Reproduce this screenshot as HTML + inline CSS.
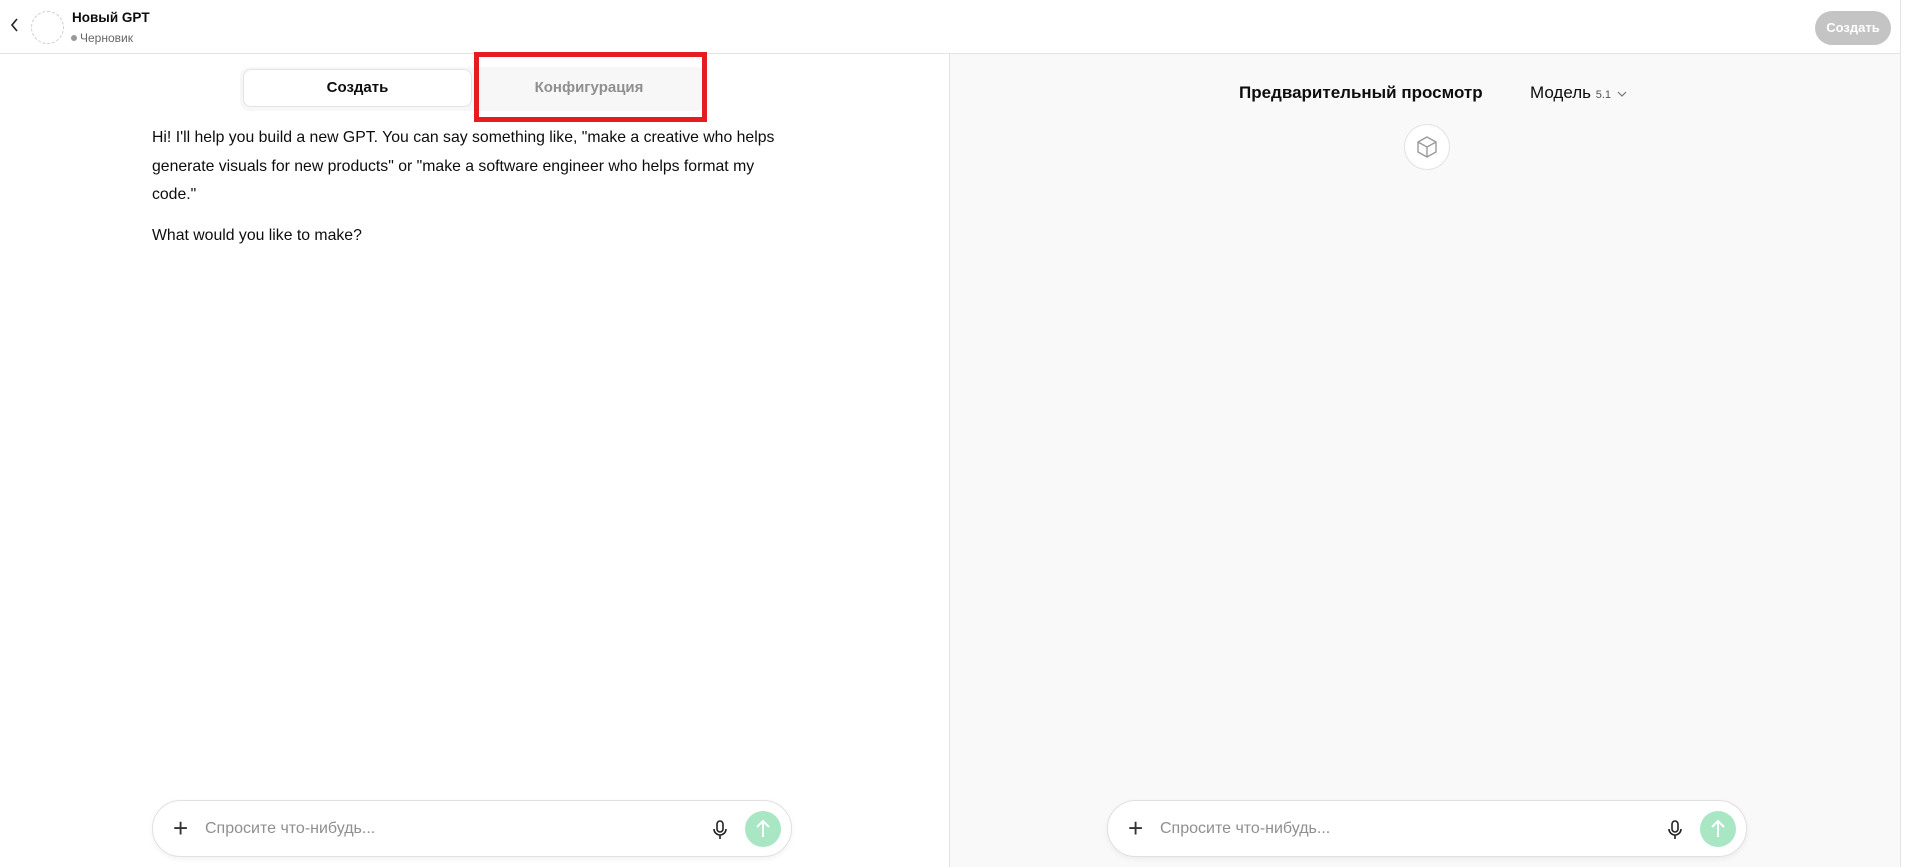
<!DOCTYPE html>
<html><head><meta charset="utf-8"><style>
*{box-sizing:border-box;margin:0;padding:0}
body{width:1907px;height:867px;overflow:hidden;background:#fff;font-family:"Liberation Sans","Noto Sans CJK SC",sans-serif;color:#0d0d0d;position:relative}
.hdr{position:absolute;left:0;top:0;width:1900px;height:54px;border-bottom:1px solid #e3e3e3;background:#fff}
.rightbg{position:absolute;left:949px;top:54px;width:951px;height:813px;background:#f9f9f9;border-left:1px solid #e3e3e3}
.edge{position:absolute;left:1900px;top:0;width:1px;height:867px;background:#e3e3e3}
.abs{position:absolute}
.input{position:absolute;top:800px;width:640px;height:57px;border:1px solid #e0e0e0;border-radius:29px;background:#fff;box-shadow:0 2px 6px rgba(0,0,0,.06)}
.input .ph{position:absolute;left:52px;top:19px;font-size:16px;color:#8f8f8f}
.input .plus{position:absolute;left:20px;top:13px;font-size:26px;font-weight:300;color:#333;line-height:28px}
.input .send{position:absolute;right:10px;top:10px;width:36px;height:36px;border-radius:50%;background:#a8e6c4}
.input .mic{position:absolute;right:63px;top:18px}
</style></head><body>
<div class="hdr"></div>
<div class="rightbg"></div>
<div class="edge"></div>
<svg class="abs" style="left:9px;top:17px" width="12" height="16" viewBox="0 0 12 16"><path d="M8 2L3 8l5 6" stroke="#222" stroke-width="1.6" fill="none"/></svg>
<div class="abs" style="left:31px;top:11px;width:33px;height:33px;border:1.5px dashed #ccc;border-radius:50%"></div>
<div class="abs" style="left:72px;top:10px;font-size:13.5px;font-weight:bold">Новый GPT</div>
<div class="abs" style="left:71px;top:31px;font-size:12px;color:#666"><span style="display:inline-block;width:6px;height:6px;border-radius:50%;background:#999;margin-right:3px;vertical-align:1px"></span>Черновик</div>
<div class="abs" style="left:1815px;top:11px;width:76px;height:34px;border-radius:17px;background:#c4c4c4;color:#fff;font-size:13px;font-weight:bold;text-align:center;line-height:34px">Создать</div>

<div class="abs" style="left:240px;top:67px;width:466px;height:44px;background:#f7f7f7;border-radius:10px"></div>
<div class="abs" style="left:243px;top:69px;width:229px;height:38px;background:#fff;border:1px solid #e3e3e3;border-radius:8px;text-align:center;line-height:36px;font-size:15px;font-weight:bold">Создать</div>
<div class="abs" style="left:474px;top:69px;width:230px;height:38px;text-align:center;line-height:38px;font-size:15px;font-weight:bold;color:#8f8f8f">Конфигурация</div>
<div class="abs" style="left:474px;top:52px;width:233px;height:70px;border:5px solid #e41e20"></div>

<div class="abs" style="left:152px;top:124px;white-space:nowrap;font-size:15.8px;line-height:28.5px">Hi! I'll help you build a new GPT. You can say something like, "make a creative who helps<br>generate visuals for new products" or "make a software engineer who helps format my<br>code."</div>
<div class="abs" style="left:152px;top:225px;font-size:15.8px;line-height:22px">What would you like to make?</div>

<div class="abs" style="left:1239px;top:83px;font-size:17px;font-weight:bold">Предварительный просмотр</div>
<div class="abs" style="left:1530px;top:83px;font-size:17px">Модель <span style="font-size:11px;color:#555">5.1</span> <svg width="12" height="8" viewBox="0 0 12 8"><path d="M2 2l4 4 4-4" stroke="#777" stroke-width="1.2" fill="none"/></svg></div>
<div class="abs" style="left:1404px;top:124px;width:46px;height:46px;border:1px solid #e3e3e3;border-radius:50%;background:#fff"></div>
<svg class="abs" style="left:1414px;top:134px" width="26" height="26" viewBox="0 0 26 26"><path d="M13 3l9 5v10l-9 5-9-5V8z M4 8l9 5 9-5 M13 13v10" stroke="#999" stroke-width="1.4" fill="none" stroke-linejoin="round"/></svg>

<div class="input" style="left:152px"><div class="plus">+</div><div class="ph">Спросите что-нибудь...</div>
<svg class="mic" width="16" height="22" viewBox="0 0 16 22"><rect x="5" y="2" width="6" height="11" rx="3" stroke="#222" stroke-width="1.6" fill="none"/><path d="M2 10a6 6 0 0 0 12 0M8 16v4" stroke="#222" stroke-width="1.6" fill="none"/></svg>
<div class="send"><svg width="36" height="36" viewBox="0 0 36 36"><path d="M18 26V11M12 16l6-6 6 6" stroke="#fff" stroke-width="2" fill="none"/></svg></div></div>
<div class="input" style="left:1107px"><div class="plus">+</div><div class="ph">Спросите что-нибудь...</div>
<svg class="mic" width="16" height="22" viewBox="0 0 16 22"><rect x="5" y="2" width="6" height="11" rx="3" stroke="#222" stroke-width="1.6" fill="none"/><path d="M2 10a6 6 0 0 0 12 0M8 16v4" stroke="#222" stroke-width="1.6" fill="none"/></svg>
<div class="send"><svg width="36" height="36" viewBox="0 0 36 36"><path d="M18 26V11M12 16l6-6 6 6" stroke="#fff" stroke-width="2" fill="none"/></svg></div></div>
</body></html>
